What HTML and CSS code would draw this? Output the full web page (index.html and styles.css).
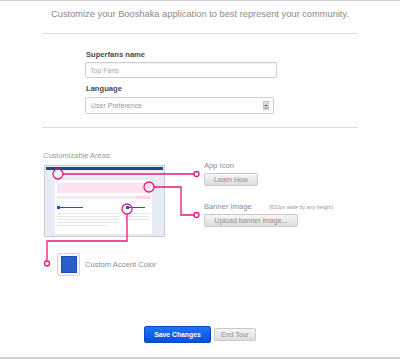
FILE: index.html
```html
<!DOCTYPE html>
<html lang="en">
<head>
    <meta charset="UTF-8">
    <meta name="viewport" content="width=device-width, initial-scale=1.0">
    <title>Customize Booshaka</title>
    <link rel="stylesheet" href="styles.css">
</head>
<body>
    <div class="page">
        <p class="intro">Customize your Booshaka application to best represent your community.</p>
        <hr class="rule">

        <form class="settings">
            <label class="field-label" for="superfans">Superfans name</label>
            <input class="text-input" id="superfans" type="text" placeholder="Top Fans">
            <label class="field-label label-gap" for="language">Language</label>
            <div class="select" id="language">
                <span>User Preference</span>
                <span class="select-arrow"></span>
            </div>
        </form>

        <hr class="rule">

        <section class="custom">
            <div class="custom-body">
                <div class="preview">
                    <p class="custom-title">Customizable Areas:</p>
                    <svg class="thumb" width="121" height="72" viewBox="0 0 121 72">
                        <rect x="0.5" y="0.5" width="120" height="71" fill="#e7ebf2" stroke="#c9cdd5"/>
                        <rect x="2" y="2" width="117" height="3" fill="#26468c"/>
                        <rect x="4" y="6" width="113" height="6" fill="#f3f5f9"/>
                        <rect x="11" y="15" width="97" height="54" fill="#ffffff"/>
                        <rect x="13" y="18" width="94" height="10" fill="#fde2ef"/>
                        <rect x="13" y="31" width="94" height="3" fill="#eceef3"/>
                        <rect x="92" y="31" width="15" height="3" fill="#f8d6e6"/>
                        <rect x="13" y="41" width="3" height="3" fill="#1753d6"/>
                        <rect x="16" y="42" width="23" height="1" fill="#1753d6"/>
                        <rect x="82" y="41" width="3" height="3" fill="#1753d6"/>
                        <rect x="85" y="42" width="16" height="1" fill="#1753d6"/>
                        <rect x="13" y="48" width="62" height="1" fill="#e3e5ea"/>
                        <rect x="13" y="51" width="62" height="1" fill="#e3e5ea"/>
                        <rect x="13" y="54" width="62" height="1" fill="#e3e5ea"/>
                        <rect x="13" y="57" width="62" height="1" fill="#e3e5ea"/>
                        <rect x="13" y="60" width="50" height="1" fill="#e3e5ea"/>
                        <rect x="82" y="48" width="24" height="1" fill="#e3e5ea"/>
                        <rect x="82" y="51" width="24" height="1" fill="#e3e5ea"/>
                        <rect x="82" y="54" width="24" height="1" fill="#e3e5ea"/>
                    </svg>
                </div>
                <div class="options">
                    <p class="option-label">App Icon</p>
                    <button type="button" class="btn btn-small">Learn How</button>
                    <p class="option-label banner-label">Banner Image <span class="hint">(810px wide by any height)</span></p>
                    <button type="button" class="btn btn-upload">Upload banner image...</button>
                </div>
            </div>

            <div class="accent">
                <div class="swatch"><span class="swatch-color"></span></div>
                <span class="accent-label">Custom Accent Color</span>
            </div>
        </section>

        <div class="actions">
            <button type="button" class="btn-save">Save Changes</button>
            <button type="button" class="btn btn-end">End Tour</button>
        </div>

        <!-- callout lines from the preview to the options -->
        <svg class="connectors" width="400" height="359" viewBox="0 0 400 359">
            <g fill="none" stroke="#e5177f" stroke-width="1.3">
                <circle cx="58" cy="173" r="5"/>
                <path d="M63 173H194"/>
                <circle cx="149" cy="186" r="5"/>
                <path d="M154 186H181V214H194"/>
                <circle cx="127" cy="208" r="5"/>
                <path d="M127 213V240H47V260"/>
            </g>
            <g fill="#fff" stroke="#e5177f" stroke-width="1.3">
                <circle cx="196.5" cy="173" r="2.5"/>
                <circle cx="196.5" cy="214" r="2.5"/>
                <circle cx="47" cy="262.5" r="2.5"/>
            </g>
        </svg>
    </div>
</body>
</html>
```

FILE: styles.css
```css
body {
    margin: 0;
    font-family: "Liberation Sans", Arial, sans-serif;
    background-color: #fff;
    color: #888;
}
.page {
    position: relative;
    height: 359px;
    box-sizing: border-box;
    border-top: 1px solid #d2d2d2;
    border-bottom: 2px solid #d2d2d2;
}
.intro {
    margin: 7px 0 0;
    font-size: 9.3px;
    line-height: 12px;
    text-align: center;
    color: #8a8a8a;
}
.rule {
    margin: 13px 42px 0;
    height: 0;
    border: 0;
    border-top: 1px solid #dedede;
}
.settings {
    margin: 16px 0 0 85px;
    width: 192px;
}
.field-label {
    display: block;
    font-size: 7.6px;
    line-height: 10px;
    font-weight: bold;
    color: #4a4a4a;
    padding-left: 1px;
}
.label-gap {
    margin-top: 6px;
}
.text-input {
    display: block;
    margin-top: 2px;
    width: 192px;
    height: 16px;
    box-sizing: border-box;
    border: 1px solid #cfcfcf;
    border-radius: 2px;
    box-shadow: inset 0 1px 1px rgba(0, 0, 0, 0.06);
    padding: 0 0 0 4px;
    font-family: inherit;
    font-size: 7px;
    color: #444;
}
.text-input::placeholder {
    color: #a8a8a8;
}
.select {
    display: flex;
    align-items: center;
    justify-content: space-between;
    margin-top: 3px;
    width: 189px;
    height: 17px;
    box-sizing: border-box;
    border: 1px solid #cfcfcf;
    border-radius: 2px;
    padding: 0 4px 0 5px;
    font-size: 7px;
    color: #999;
}
.select-arrow {
    position: relative;
    width: 6px;
    height: 9px;
    background: linear-gradient(#e2e2e2, #b9b9b9);
    border: 1px solid #c4c4c4;
    box-sizing: border-box;
}
.select-arrow::after {
    content: "";
    position: absolute;
    left: 1px;
    top: 3px;
    width: 2px;
    height: 1px;
    background: #555;
}
.custom {
    margin-top: 23px;
    padding-left: 43px;
}
.custom-body {
    display: flex;
}
.custom-title {
    margin: 0;
    font-size: 7.5px;
    line-height: 10px;
    color: #9a9a9a;
}
.thumb {
    display: block;
    margin: 4px 0 0 1px;
}
.options {
    margin-left: 39px;
    padding-top: 10px;
}
.option-label {
    margin: 0;
    font-size: 7.6px;
    line-height: 10px;
    color: #8c8c8c;
}
.banner-label {
    margin-top: 16px;
}
.hint {
    margin-left: 15px;
    font-size: 5.4px;
    color: #999;
}
.btn {
    display: block;
    margin-top: 2px;
    height: 13px;
    padding: 0;
    box-sizing: border-box;
    border: 1px solid #cacaca;
    border-radius: 2px;
    background: linear-gradient(#f6f6f6, #dcdcdc);
    font-family: inherit;
    font-size: 7px;
    color: #8e8e8e;
}
.btn-small {
    width: 54px;
}
.btn-upload {
    width: 94px;
}
.accent {
    display: flex;
    align-items: center;
    margin: 16px 0 0 14px;
}
.swatch {
    display: flex;
    align-items: center;
    justify-content: center;
    width: 23px;
    height: 23px;
    box-sizing: border-box;
    border: 1px solid #d4d4d4;
    border-radius: 2px;
    background: #f7f7f7;
}
.swatch-color {
    width: 16px;
    height: 17px;
    background: #2a5fcb;
    border: 1px solid #1e4fb5;
    box-sizing: border-box;
}
.accent-label {
    margin-left: 5px;
    font-size: 7.6px;
    color: #8c8c8c;
}
.actions {
    display: flex;
    justify-content: center;
    align-items: center;
    gap: 3px;
    margin-top: 50px;
}
.btn-save {
    width: 67px;
    height: 17px;
    padding: 0;
    border: 1px solid #0a48c4;
    border-radius: 2px;
    background: linear-gradient(#1d74f5, #0750dd);
    font-family: inherit;
    font-size: 6.8px;
    font-weight: bold;
    color: #fff;
}
.btn-end {
    margin-top: 0;
    width: 42px;
}
.connectors {
    position: absolute;
    left: 0;
    top: 0;
    pointer-events: none;
}
```
